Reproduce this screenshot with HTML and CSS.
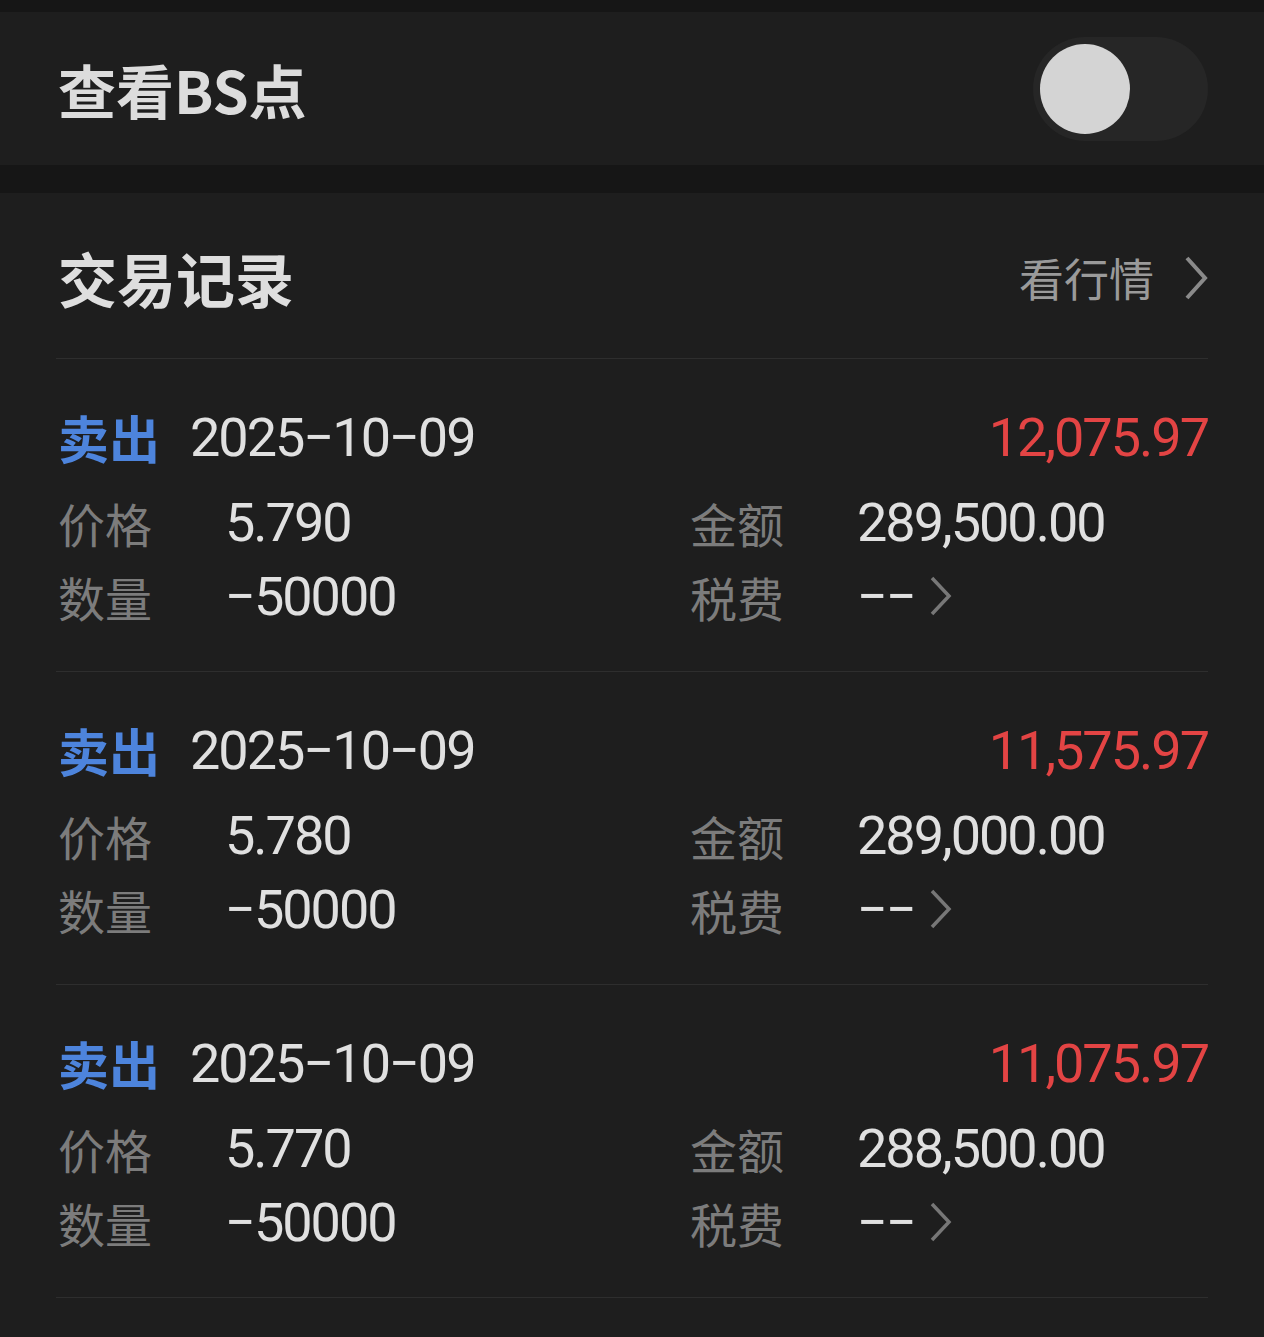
FILE: index.html
```html
<!DOCTYPE html>
<html lang="zh-CN">
<head>
    <meta charset="UTF-8">
    <meta name="viewport" content="width=device-width, initial-scale=1.0">
    <title>交易记录</title>
    <link rel="stylesheet" href="styles.css">
</head>
<body>
    <div class="panel bs-panel">
        <div class="bs-title">查看BS点</div>
        <div class="toggle"><div class="knob"></div></div>
    </div>

    <div class="panel records">
        <div class="records-head">
            <div class="records-title">交易记录</div>
            <div class="quote-link">
                看行情
                <svg class="chev-lg" width="24" height="44" viewBox="0 0 24 44"><polyline points="3,2 21,22 3,42" fill="none" stroke="#8a8a8a" stroke-width="4"/></svg>
            </div>
        </div>

        <div class="record">
            <div class="rec-head">
                <span class="side">卖出</span>
                <span class="date">2025−10−09</span>
                <span class="pnl">12,075.97</span>
            </div>
            <div class="rec-info">
                <div class="cell"><span class="label">价格</span><span class="val">5.790</span></div>
                <div class="cell"><span class="label">金额</span><span class="val">289,500.00</span></div>
                <div class="cell"><span class="label">数量</span><span class="val">−50000</span></div>
                <div class="cell"><span class="label">税费</span><span class="val">−−</span><svg class="chev-sm" width="24" height="40" viewBox="0 0 24 40"><polyline points="3,2 20,20 3,38" fill="none" stroke="#777" stroke-width="3.5"/></svg></div>
            </div>
        </div>

        <div class="record">
            <div class="rec-head">
                <span class="side">卖出</span>
                <span class="date">2025−10−09</span>
                <span class="pnl">11,575.97</span>
            </div>
            <div class="rec-info">
                <div class="cell"><span class="label">价格</span><span class="val">5.780</span></div>
                <div class="cell"><span class="label">金额</span><span class="val">289,000.00</span></div>
                <div class="cell"><span class="label">数量</span><span class="val">−50000</span></div>
                <div class="cell"><span class="label">税费</span><span class="val">−−</span><svg class="chev-sm" width="24" height="40" viewBox="0 0 24 40"><polyline points="3,2 20,20 3,38" fill="none" stroke="#777" stroke-width="3.5"/></svg></div>
            </div>
        </div>

        <div class="record">
            <div class="rec-head">
                <span class="side">卖出</span>
                <span class="date">2025−10−09</span>
                <span class="pnl">11,075.97</span>
            </div>
            <div class="rec-info">
                <div class="cell"><span class="label">价格</span><span class="val">5.770</span></div>
                <div class="cell"><span class="label">金额</span><span class="val">288,500.00</span></div>
                <div class="cell"><span class="label">数量</span><span class="val">−50000</span></div>
                <div class="cell"><span class="label">税费</span><span class="val">−−</span><svg class="chev-sm" width="24" height="40" viewBox="0 0 24 40"><polyline points="3,2 20,20 3,38" fill="none" stroke="#777" stroke-width="3.5"/></svg></div>
            </div>
        </div>
    </div>
</body>
</html>
```

FILE: styles.css
```css
body {
    margin: 0;
    padding: 12px 0 0 0;
    background-color: #161616;
    font-family: "Noto Sans CJK SC", "Noto Sans", sans-serif;
    color: #dedede;
}

.panel {
    background-color: #1e1e1e;
    padding: 0 56px;
}

.bs-panel {
    height: 153px;
    display: flex;
    align-items: center;
    justify-content: space-between;
    margin-bottom: 28px;
}

.bs-title {
    font-size: 58px;
    font-weight: bold;
    padding-left: 2px;
    color: #dcdcdc;
}

.toggle {
    width: 175px;
    height: 104px;
    border-radius: 52px;
    background-color: #262626;
    display: flex;
    align-items: center;
    padding-left: 7px;
    box-sizing: border-box;
}

.knob {
    width: 90px;
    height: 90px;
    border-radius: 50%;
    background-color: #d4d4d4;
}

.records {
    min-height: 1144px;
}

.records-head {
    height: 166px;
    display: flex;
    align-items: center;
    justify-content: space-between;
    border-bottom: 1px solid #2e2e2e;
    box-sizing: border-box;
    padding-top: 4px;
}

.records-title {
    font-size: 59px;
    font-weight: bold;
    padding-left: 2px;
}

.quote-link {
    display: flex;
    align-items: center;
    gap: 30px;
    font-size: 45px;
    color: #9a9a9a;
}

.record {
    height: 313px;
    box-sizing: border-box;
    padding: 40px 0 0 2px;
    border-bottom: 1px solid #2e2e2e;
}

.rec-head {
    height: 76px;
    display: flex;
    align-items: center;
    margin-bottom: 10px;
}

.side {
    font-size: 51px;
    font-weight: bold;
    color: #4d84dc;
    margin-right: 30px;
}

.date,
.val,
.pnl {
    font-family: Roboto, "Noto Sans", sans-serif;
    font-size: 54px;
    letter-spacing: -2px;
    color: #e0e0e0;
}

.pnl {
    margin-left: auto;
    color: #e34444;
}

.rec-info {
    display: grid;
    grid-template-columns: 632px 1fr;
    grid-auto-rows: 74px;
}

.cell {
    display: flex;
    align-items: center;
}

.label {
    width: 167px;
    font-size: 47px;
    color: #7c7c7c;
}

.chev-sm {
    margin-left: 14px;
}
```
